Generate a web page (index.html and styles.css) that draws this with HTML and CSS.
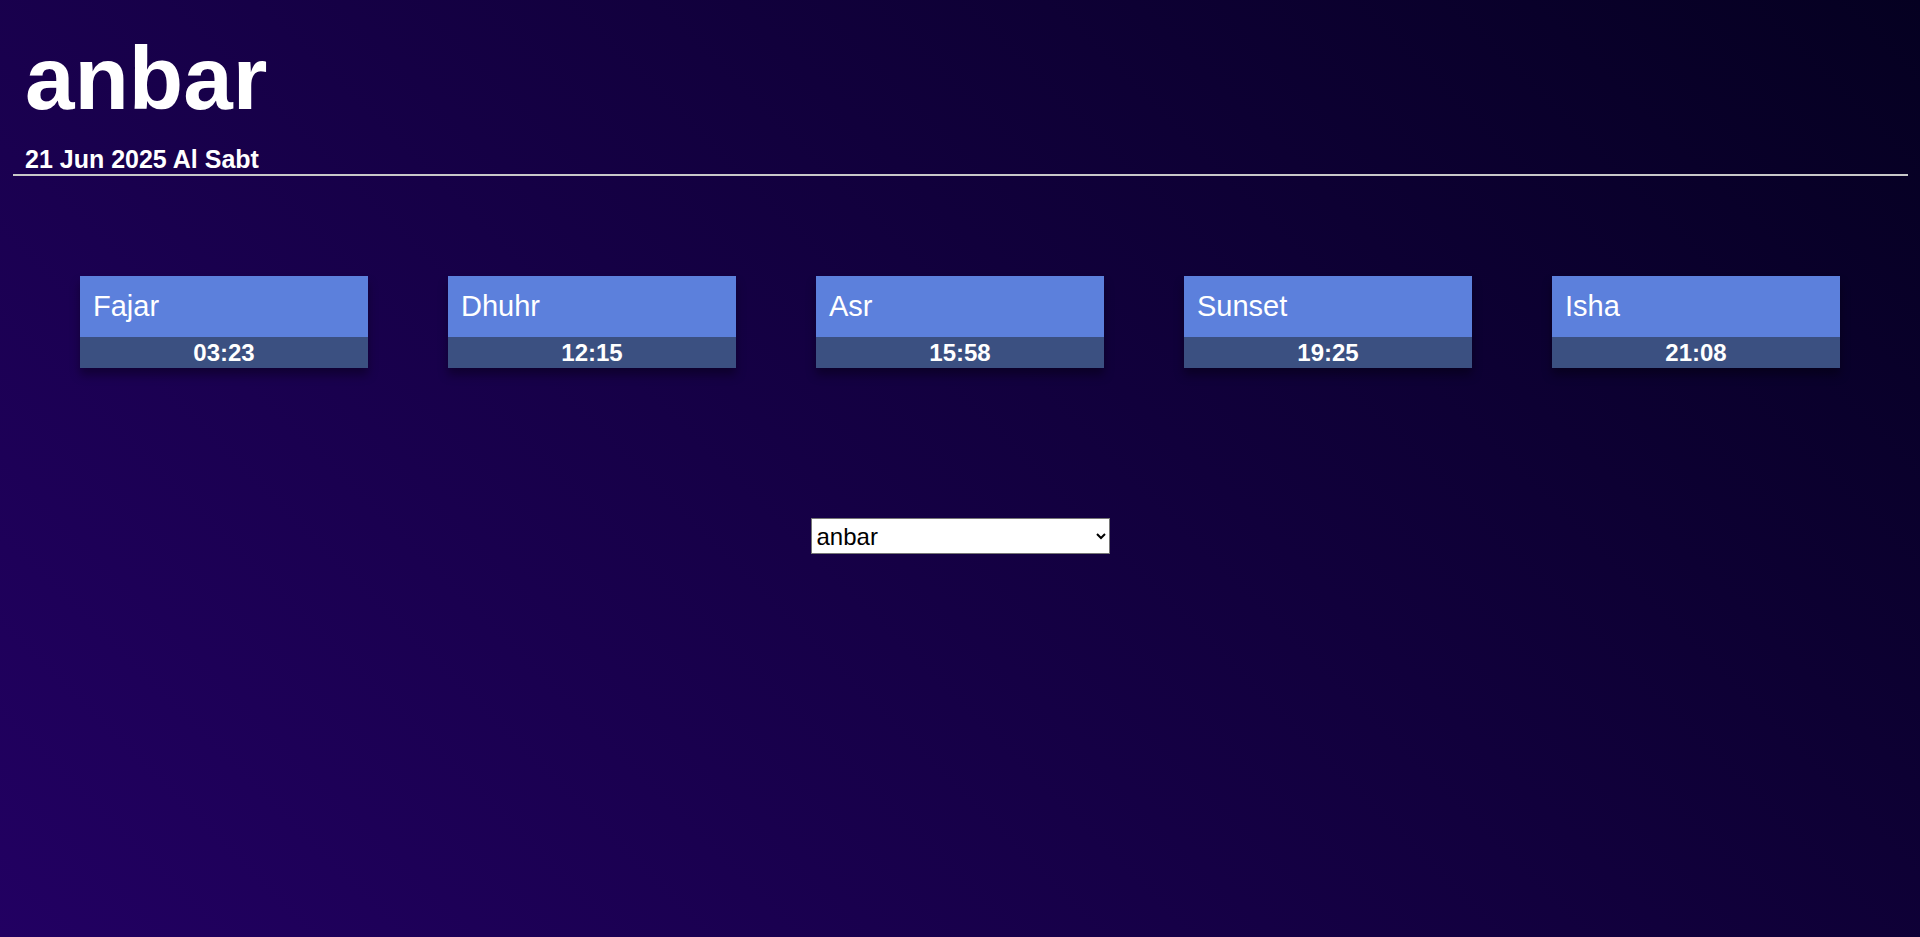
FILE: index.html
```html
<!DOCTYPE html>
<html lang="en">
<head>
<meta charset="utf-8">
<title>anbar</title>
<link rel="stylesheet" href="styles.css">
</head>
<body>
<header class="header">
  <h1 class="city">anbar</h1>
  <div class="date">21 Jun 2025 Al Sabt</div>
</header>
<hr class="rule">
<main class="prayers">
  <div class="card"><div class="card-name">Fajar</div><div class="card-time">03:23</div></div>
  <div class="card"><div class="card-name">Dhuhr</div><div class="card-time">12:15</div></div>
  <div class="card"><div class="card-name">Asr</div><div class="card-time">15:58</div></div>
  <div class="card"><div class="card-name">Sunset</div><div class="card-time">19:25</div></div>
  <div class="card"><div class="card-name">Isha</div><div class="card-time">21:08</div></div>
</main>
<div class="picker">
  <select class="city-select">
    <option selected>anbar</option>
    <option>baghdad</option>
    <option>basra</option>
  </select>
</div>
</body>
</html>
```
FILE: styles.css
```css
html, body {
  margin: 0;
  padding: 0;
  height: 100%;
}
body {
  background: linear-gradient(45deg, #220062 0%, #050021 100%);
  color: #ffffff;
  font-family: "Liberation Sans", Arial, sans-serif;
  min-height: 937px;
}
.header {
  padding: 29px 0 0 25px;
}
.city {
  margin: 0;
  font-size: 89px;
  font-weight: bold;
  line-height: 98px;
}
.date {
  margin-top: 19px;
  font-size: 25px;
  font-weight: bold;
  line-height: 27px;
}
.rule {
  margin: 1px 12px 0 13px;
  border: 0;
  height: 2px;
  background: #c8c8c8;
}
.prayers {
  display: flex;
  justify-content: space-evenly;
  margin-top: 100px;
}
.card {
  width: 288px;
  box-shadow: 0 7px 9px rgba(0, 0, 0, 0.35);
}
.card-name {
  height: 61px;
  box-sizing: border-box;
  padding: 13px 13px 0;
  background: #5c80dc;
  font-size: 29px;
  line-height: 34px;
}
.card-time {
  height: 31px;
  background: #3b5081;
  text-align: center;
  font-size: 24px;
  font-weight: bold;
  line-height: 32px;
}
.picker {
  display: flex;
  justify-content: center;
  margin-top: 150px;
}
.city-select {
  width: 299px;
  height: 36px;
  padding-left: 1px;
  font-family: "Liberation Sans", Arial, sans-serif;
  font-size: 24px;
  background: #ffffff;
  color: #000000;
  border: 1px solid #767676;
}
```
